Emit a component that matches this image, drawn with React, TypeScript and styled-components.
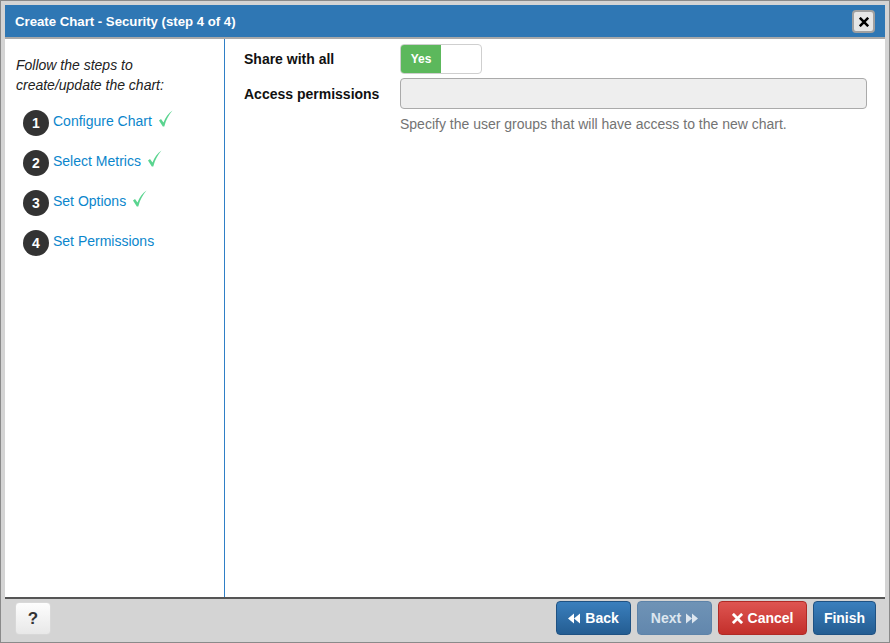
import React from "react";
import styled, {createGlobalStyle} from "styled-components";

const GlobalStyle = createGlobalStyle`
  html, body {
    margin: 0;
    padding: 0;
    background: #d4d4d4;
  }

  body {
    font-family: "Liberation Sans", Arial, sans-serif;
    font-size: 14px;
    color: #333;
  }
`;

const Frame = styled.div`
  box-sizing: border-box;
  width: 890px;
  height: 643px;
  border: 1px solid #8a8a8a;
  padding: 4px 4px 3px 4px;
  background: #d4d4d4;
  display: flex;
  flex-direction: column;
`;

const Header = styled.div`
  height: 32px;
  background: #2f77b4;
  border-bottom: 2px solid #a9a9a9;
  display: flex;
  align-items: center;
  justify-content: space-between;
  padding: 0 10px 0 10px;
`;

const Title = styled.span`
  color: #fff;
  font-weight: bold;
  font-size: 13.2px;
`;

const CloseButton = styled.button`
  box-sizing: border-box;
  width: 23px;
  height: 23px;
  margin-top: 1px;
  padding: 0;
  border: 2px solid #a0a0a0;
  border-radius: 4px;
  background: #e6e6e6;
  display: flex;
  align-items: center;
  justify-content: center;
`;

const Body = styled.div`
  flex: 1;
  display: flex;
  background: #fff;
  min-height: 0;
`;

const Sidebar = styled.div`
  width: 208px;
  padding: 16px 0 0 11px;
  border-right: 1px solid #2f7fc6;
`;

const Intro = styled.p`
  margin: 0 0 7px 0;
  font-style: italic;
  line-height: 20px;
  color: #222;
`;

const StepList = styled.ol`
  list-style: none;
  margin: 0;
  padding: 0 0 0 7px;
`;

const Step = styled.li`
  height: 40px;
  display: flex;
  align-items: center;
  gap: 4px;
`;

const StepNumber = styled.span`
  width: 26px;
  height: 26px;
  border-radius: 50%;
  background: #333;
  color: #fff;
  font-weight: bold;
  font-size: 14px;
  display: flex;
  align-items: center;
  justify-content: center;
  margin-top: 2px;
`;

const StepLink = styled.a`
  color: #0b86cc;
  text-decoration: none;
  font-size: 14px;
  margin-top: -2px;
`;

const Check = styled.svg`
  margin-left: 2px;
  margin-top: -7px;
`;

const Content = styled.div`
  flex: 1;
  padding: 5px 18px 0 19px;
`;

const FieldRow = styled.div`
  display: flex;
  align-items: center;
  margin-bottom: 4px;
`;

const Label = styled.label`
  width: 156px;
  font-weight: bold;
  color: #111;
`;

const Toggle = styled.div`
  box-sizing: border-box;
  width: 82px;
  height: 30px;
  border: 1px solid #cfcfcf;
  border-radius: 4px;
  overflow: hidden;
  display: flex;
  background: #fff;
`;

const ToggleOn = styled.span`
  width: 40px;
  background: #5cb85c;
  color: #fff;
  font-weight: bold;
  font-size: 12px;
  display: flex;
  align-items: center;
  justify-content: center;
`;

const Input = styled.div`
  box-sizing: border-box;
  flex: 1;
  height: 31px;
  border: 1px solid #aaa;
  border-radius: 4px;
  background: #eee;
`;

const HelpText = styled.p`
  margin: 5px 0 0 156px;
  color: #737373;
  font-size: 14px;
  line-height: 20px;
`;

const Footer = styled.div`
  height: 38px;
  border-top: 2px solid #555;
  display: flex;
  align-items: flex-start;
  justify-content: space-between;
  padding: 2px 9px 0 10px;
`;

const HelpButton = styled.button`
  box-sizing: border-box;
  width: 36px;
  height: 33px;
  margin-top: 1px;
  border: 1px solid #d8d8d8;
  border-radius: 4px;
  background: linear-gradient(#fdfdfd, #e8e8e8);
  color: #333;
  font-family: "Liberation Sans", Arial, sans-serif;
  font-weight: bold;
  font-size: 17px;
  padding: 0;
`;

const ButtonGroup = styled.div`
  display: flex;
  gap: 6px;
`;

const tones = {
  primary: {from: "#3a7fbd", to: "#245d92", border: "#1f5283", color: "#fff"},
  disabled: {from: "#6f93b6", to: "#6287ad", border: "#5d83a9", color: "#dde6ef"},
  danger: {from: "#de5551", to: "#c32f2b", border: "#b02a26", color: "#fff"},
};

const ActionButton = styled.button<{$tone: keyof typeof tones; $width: number}>`
  box-sizing: border-box;
  width: ${p => p.$width}px;
  height: 34px;
  border: 1px solid ${p => tones[p.$tone].border};
  border-radius: 4px;
  background: linear-gradient(${p => tones[p.$tone].from}, ${p => tones[p.$tone].to});
  color: ${p => tones[p.$tone].color};
  font-family: "Liberation Sans", Arial, sans-serif;
  font-weight: bold;
  font-size: 14px;
  display: flex;
  align-items: center;
  justify-content: center;
  gap: 5px;
  padding: 0;
`;

const steps = [
	{num: 1, name: "Configure Chart", done: true},
	{num: 2, name: "Select Metrics", done: true},
	{num: 3, name: "Set Options", done: true},
	{num: 4, name: "Set Permissions", done: false},
];

const Times = ({size, color}: {size: number; color: string}) => (
	<svg width={size} height={size} viewBox="0 0 12 12">
		<path d="M2 2 L10 10 M10 2 L2 10" stroke={color} strokeWidth={3} strokeLinecap="square" />
	</svg>
);

const Backward = () => (
	<svg width="12" height="11" viewBox="0 0 12 11">
		<path d="M0 5.5 L6 0.5 V10.5 Z M6 5.5 L12 0.5 V10.5 Z" fill="#fff" />
	</svg>
);

const Forward = () => (
	<svg width="12" height="11" viewBox="0 0 12 11">
		<path d="M12 5.5 L6 0.5 V10.5 Z M6 5.5 L0 0.5 V10.5 Z" fill="#dde6ef" />
	</svg>
);

const CheckMark = () => (
	<Check width="15" height="17" viewBox="0 0 15 17">
		<path d="M1 10.5 L3 9 L5.5 12.5 C7.5 7.5 10.5 3 14.5 0.5 C11 4.5 8 9.5 6.3 16.5 L4.8 16.5 Z" fill="#5ad48f" />
	</Check>
);

export default function App() {
	return (
		<>
			<GlobalStyle />
			<Frame>
				<Header>
					<Title>Create Chart - Security (step 4 of 4)</Title>
					<CloseButton aria-label="close"><Times size={10} color="#000" /></CloseButton>
				</Header>
				<Body>
					<Sidebar>
						<Intro>Follow the steps to<br />create/update the chart:</Intro>
						<StepList>
							{steps.map(step => (
								<Step key={step.num}>
									<StepNumber>{step.num}</StepNumber>
									<StepLink href="#">{step.name}</StepLink>
									{step.done && <CheckMark />}
								</Step>
							))}
						</StepList>
					</Sidebar>
					<Content>
						<FieldRow>
							<Label>Share with all</Label>
							<Toggle><ToggleOn>Yes</ToggleOn></Toggle>
						</FieldRow>
						<FieldRow>
							<Label>Access permissions</Label>
							<Input />
						</FieldRow>
						<HelpText>Specify the user groups that will have access to the new chart.</HelpText>
					</Content>
				</Body>
				<Footer>
					<HelpButton>?</HelpButton>
					<ButtonGroup>
						<ActionButton $tone="primary" $width={75}><Backward />Back</ActionButton>
						<ActionButton $tone="disabled" $width={75}>Next <Forward /></ActionButton>
						<ActionButton $tone="danger" $width={89}><Times size={11} color="#fff" />Cancel</ActionButton>
						<ActionButton $tone="primary" $width={63}>Finish</ActionButton>
					</ButtonGroup>
				</Footer>
			</Frame>
		</>
	);
}
